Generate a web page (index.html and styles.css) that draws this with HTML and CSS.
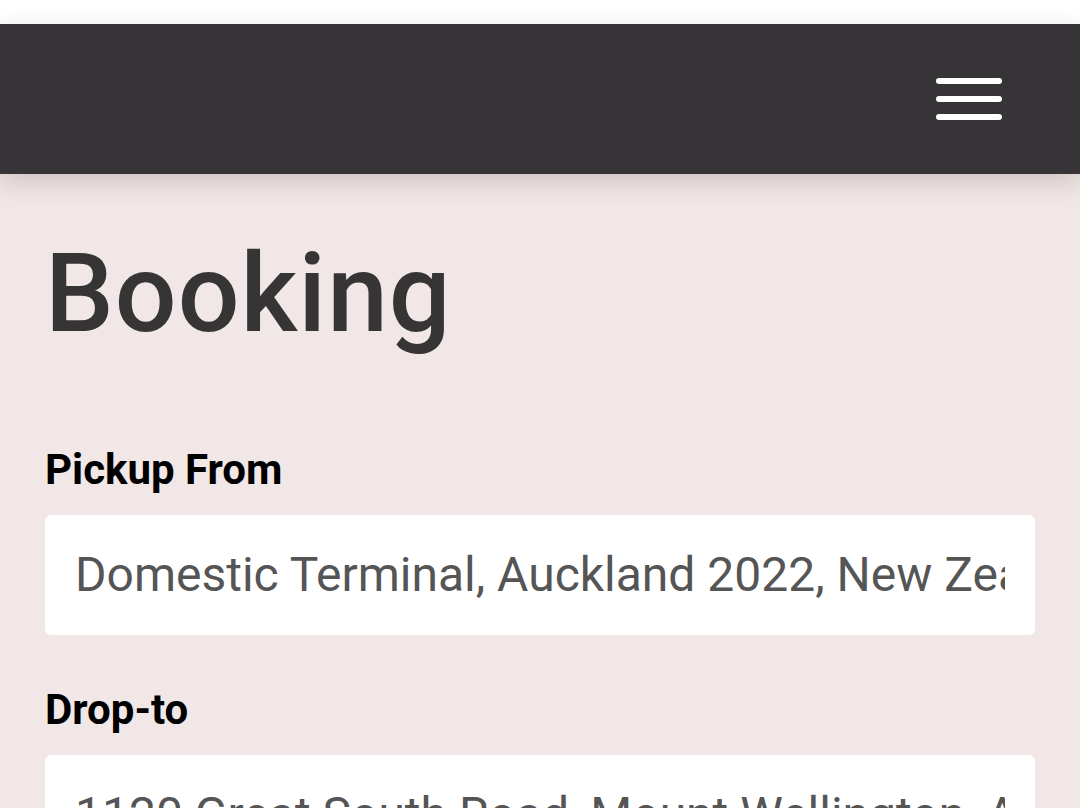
FILE: index.html
```html
<!DOCTYPE html>
<html>
<head>
<meta charset="utf-8">
<link rel="stylesheet" href="styles.css">
</head>
<body>
<div class="topstrip"></div>
<header class="header">
  <button class="menu" aria-label="Menu">
    <span></span><span></span><span></span>
  </button>
</header>
<main class="content">
  <h1 class="title">Booking</h1>
  <div class="field">
    <label class="label">Pickup From</label>
    <div class="input"><span class="value">Domestic Terminal, Auckland 2022, New Zealand</span></div>
  </div>
  <div class="field">
    <label class="label">Drop-to</label>
    <div class="input"><span class="value">1120 Great South Road, Mount Wellington, Auckland</span></div>
  </div>
</main>
</body>
</html>
```
FILE: styles.css
```css
html, body {
  margin: 0;
  padding: 0;
}
body {
  background: #f1e7e6;
  font-family: Roboto, "Noto Sans", sans-serif;
  overflow: hidden;
  height: 808px;
}
.topstrip {
  height: 24px;
  background: #ffffff;
}
.header {
  height: 150px;
  background: #363436;
  display: flex;
  align-items: center;
  justify-content: flex-end;
  padding-right: 78px;
  box-shadow: 0 8px 24px rgba(60, 40, 40, 0.18);
  position: relative;
  z-index: 1;
}
.menu {
  background: none;
  border: 0;
  padding: 0;
  width: 66px;
  display: flex;
  flex-direction: column;
  gap: 12px;
}
.menu span {
  display: block;
  height: 6px;
  border-radius: 3px;
  background: #ffffff;
}
.content {
  padding: 0 45px;
}
.title {
  margin: 0;
  padding-top: 55px;
  font-size: 109px;
  font-weight: 500;
  color: #363434;
  line-height: 1.2;
  letter-spacing: 1px;
}
.field {
  display: flex;
  flex-direction: column;
}
.label {
  font-size: 42px;
  font-weight: 700;
  color: #000;
  margin-top: 89px;
  line-height: 1;
}
.field + .field .label {
  margin-top: 54px;
}
.input {
  margin-top: 24px;
  height: 120px;
  background: #ffffff;
  border-radius: 6px;
  padding: 0 30px 0 30px;
  display: flex;
  align-items: center;
  overflow: hidden;
}
.value {
  font-size: 48px;
  color: #555555;
  white-space: nowrap;
  overflow: hidden;
  display: block;
  width: 100%;
}
```
